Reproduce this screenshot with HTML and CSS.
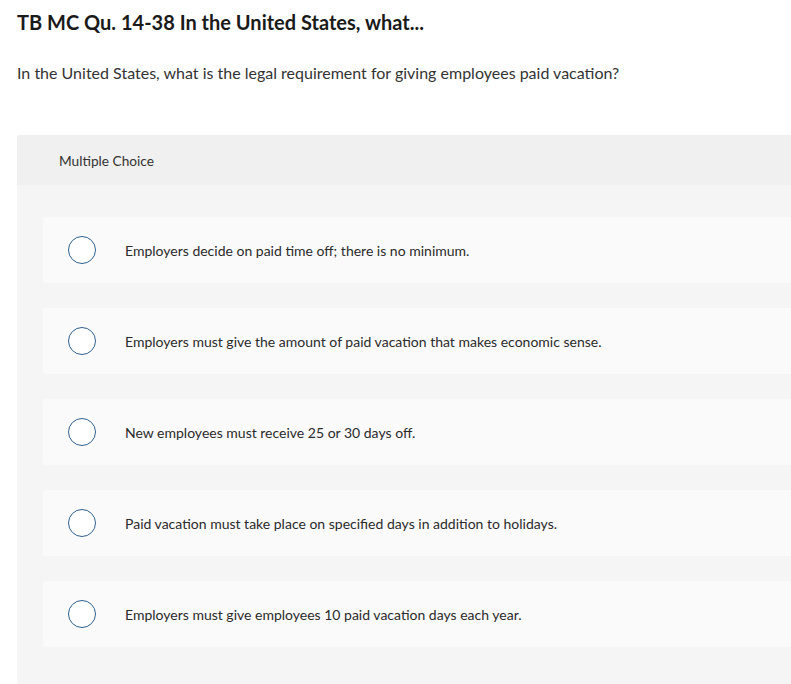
FILE: index.html
```html
<!DOCTYPE html>
<html>
<head>
<meta charset="utf-8">
<link rel="stylesheet" href="styles.css">
</head>
<body>
<div class="page">
  <h1 class="title">TB MC Qu. 14-38 In the United States, what...</h1>
  <p class="prompt">In the United States, what is the legal requirement for giving employees paid vacation?</p>
  <section class="panel">
    <div class="panel-head">Multiple Choice</div>
    <div class="panel-body">
      <div class="option"><span class="radio"></span><span class="label">Employers decide on paid time off; there is no minimum.</span></div>
      <div class="option"><span class="radio"></span><span class="label">Employers must give the amount of paid vacation that makes economic sense.</span></div>
      <div class="option"><span class="radio"></span><span class="label">New employees must receive 25 or 30 days off.</span></div>
      <div class="option"><span class="radio"></span><span class="label">Paid vacation must take place on specified days in addition to holidays.</span></div>
      <div class="option"><span class="radio"></span><span class="label">Employers must give employees 10 paid vacation days each year.</span></div>
    </div>
  </section>
</div>
</body>
</html>
```
FILE: styles.css
```css
html, body {
  margin: 0;
  padding: 0;
  overflow: hidden;
  background: #fff;
}
body {
  font-family: Lato, "Open Sans", sans-serif;
  color: #222;
}
.page {
  padding: 10px 0 0 17px;
}
.title {
  margin: 0;
  font-size: 20px;
  line-height: 24px;
  font-weight: 700;
  color: #1a1a1a;
}
.prompt {
  margin: 29px 0 0;
  font-size: 16px;
  line-height: 20px;
  color: #333;
}
.panel {
  margin-top: 52px;
  background: #f5f5f5;
  border-radius: 3px 0 0 0;
}
.panel-head {
  height: 50px;
  display: flex;
  align-items: center;
  padding-left: 42px;
  background: #f0f0f0;
  font-size: 13.7px;
  color: #333;
  border-radius: 3px 0 0 0;
}
.panel-body {
  padding: 32px 0 40px 26px;
  display: flex;
  flex-direction: column;
  gap: 25px;
}
.option {
  height: 66px;
  background: #fafafa;
  border-radius: 2px 0 0 2px;
  display: flex;
  align-items: center;
  padding-left: 25px;
}
.radio {
  width: 26px;
  height: 26px;
  border: 1.5px solid #30608f;
  border-radius: 50%;
  background: #fff;
  flex: none;
}
.label {
  margin-left: 29px;
  font-size: 14px;
  color: #2a2a2a;
}
```
